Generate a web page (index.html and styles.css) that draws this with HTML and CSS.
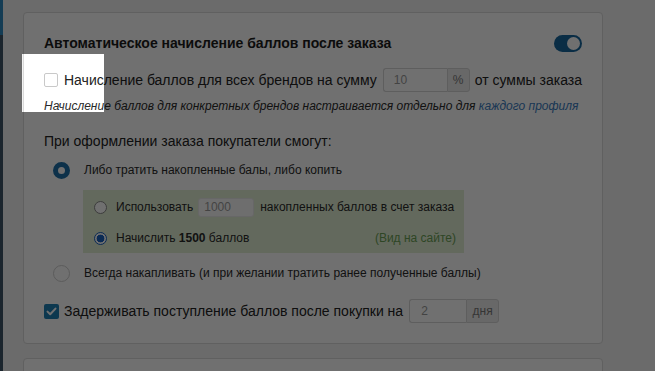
FILE: index.html
```html
<!DOCTYPE html>
<html lang="ru">
  <head>
    <meta charset="UTF-8" />
    <title>Бонусные баллы</title>
    <link rel="stylesheet" href="styles.css">
  </head>
  <body>
    <div class="layout">
      <aside class="sidebar"><div class="sidebar-top"></div></aside>
      <main class="content">
        <section class="card">
          <div class="card-head">
            <h3>Автоматическое начисление баллов после заказа</h3>
            <span class="toggle on"><span class="knob"></span></span>
          </div>

          <div class="check-row">
            <span class="checkbox"></span>
            <span>Начисление баллов для всех брендов на сумму</span>
            <span class="input-group pct">
              <input class="field" type="text" value="10" />
              <span class="addon">%</span>
            </span>
            <span>от суммы заказа</span>
          </div>
          <p class="hint">
            Начисление баллов для конкретных брендов настраивается отдельно для
            <a href="#">каждого профиля</a>
          </p>

          <p class="lead">При оформлении заказа покупатели смогут:</p>

          <div class="radio-row">
            <span class="radio big checked"></span>
            <span>Либо тратить накопленные балы, либо копить</span>
          </div>
          <div class="options">
            <div class="opt-row first">
              <span class="radio small"></span>
              <span>Использовать</span>
              <input class="field mini" type="text" value="1000" />
              <span>накопленных баллов в счет заказа</span>
            </div>
            <div class="opt-row second">
              <span class="radio small checked"></span>
              <span>Начислить <b>1500</b> баллов</span>
              <span class="preview">(Вид на сайте)</span>
            </div>
          </div>
          <div class="radio-row last">
            <span class="radio big"></span>
            <span>Всегда накапливать (и при желании тратить ранее полученные баллы)</span>
          </div>

          <div class="check-row delay">
            <span class="checkbox checked">
              <svg width="11" height="9" viewBox="0 0 11 9"><path d="M1.5 4.6 L4.2 7.2 L9.5 1.6" fill="none" stroke="#fff" stroke-width="2" stroke-linecap="round" stroke-linejoin="round"/></svg>
            </span>
            <span>Задерживать поступление баллов после покупки на</span>
            <span class="input-group days">
              <input class="field" type="text" value="2" />
              <span class="addon">дня</span>
            </span>
          </div>
        </section>
        <section class="card card-next"></section>
      </main>
    </div>
    <div class="tour-highlight"></div>
  </body>
</html>
```

FILE: styles.css
```css
html, body {
  margin: 0;
  height: 371px;
  overflow: hidden;
}
body {
  background: #f3f3f3;
  font-family: "Liberation Sans", Arial, sans-serif;
  color: #222;
}
.layout {
  display: flex;
  height: 371px;
  overflow: hidden;
}
.sidebar {
  width: 3px;
  background: #3e5566;
  flex-shrink: 0;
}
.sidebar-top {
  height: 35px;
  background: #2f8ac0;
}
.content {
  padding: 12px 0 0 20px;
}
.card {
  box-sizing: border-box;
  width: 580px;
  background: #fff;
  border: 1px solid #dadada;
  border-radius: 4px;
  padding: 20px;
  white-space: nowrap;
}
.card-next {
  margin-top: 14px;
  height: 60px;
}
.card-head {
  display: flex;
  align-items: center;
  justify-content: space-between;
  height: 20px;
}
.card-head h3 {
  margin: 0;
  font-size: 14px;
  line-height: 20px;
  font-weight: bold;
  color: #1d1d1d;
}
.toggle {
  position: relative;
  width: 28px;
  height: 17px;
  border-radius: 9px;
  background: #d0d0d0;
}
.toggle.on {
  background: #17679e;
}
.toggle .knob {
  position: absolute;
  top: 2px;
  right: 2px;
  width: 13px;
  height: 13px;
  border-radius: 50%;
  background: #fff;
}

.check-row {
  display: flex;
  align-items: center;
  height: 24px;
  margin-top: 15px;
  font-size: 14px;
  color: #222;
}
.checkbox {
  box-sizing: border-box;
  width: 14px;
  height: 14px;
  border: 1px solid #c9c9c9;
  border-radius: 2px;
  background: #fff;
  margin-right: 6px;
  flex-shrink: 0;
}
.checkbox.checked {
  width: 15px;
  height: 15px;
  margin-right: 5px;
  border: none;
  background: #1f7fb5;
  display: flex;
  align-items: center;
  justify-content: center;
}

.input-group {
  display: flex;
  height: 24px;
  margin: 0 5px 0 6px;
}
.input-group .field {
  box-sizing: border-box;
  height: 24px;
  border: 1px solid #d6d6d6;
  border-right: none;
  border-radius: 3px 0 0 3px;
  padding: 0 0 0 10px;
  font-family: inherit;
  font-size: 12px;
  color: #9a9a9a;
  background: #fff;
}
.input-group .addon {
  box-sizing: border-box;
  height: 24px;
  border: 1px solid #d6d6d6;
  border-radius: 0 3px 3px 0;
  background: #ececec;
  color: #7a7a7a;
  font-size: 12px;
  display: flex;
  align-items: center;
  justify-content: center;
}
.pct .field {
  width: 64px;
}
.pct .addon {
  width: 23px;
}
.days .field {
  width: 57px;
  padding-left: 11px;
}
.days .addon {
  width: 33px;
}

.hint {
  margin: 6px 0 0;
  font-size: 12px;
  line-height: 16px;
  font-style: italic;
  color: #2a2a2a;
}
.hint a {
  color: #3b7cc0;
  text-decoration: none;
}
.lead {
  margin: 17px 0 0;
  font-size: 14px;
  line-height: 20px;
  color: #222;
}

.radio-row {
  display: flex;
  align-items: center;
  height: 20px;
  margin: 9px 0 0 9px;
  font-size: 12px;
  color: #2a2a2a;
}
.radio-row.last {
  margin-top: 10px;
}
.radio {
  box-sizing: border-box;
  border-radius: 50%;
  background: #fff;
  flex-shrink: 0;
}
.radio.big {
  width: 17px;
  height: 17px;
  border: 1px solid #d0d0d0;
  margin-right: 14px;
}
.radio.big.checked {
  border: 5px solid #1f70a8;
}
.radio.small {
  width: 13px;
  height: 13px;
  border: 1px solid #8a8a8a;
  margin-right: 9px;
}
.radio.small.checked {
  border: 1px solid #1b62c0;
  background: radial-gradient(circle, #1b62c0 0 3.6px, #fff 4.2px);
}

.options {
  box-sizing: border-box;
  width: 381px;
  margin: 10px 0 0 39px;
  padding: 7px 8px 5px 11px;
  background: #e1efd3;
  font-size: 12px;
  color: #2a2a2a;
}
.opt-row {
  display: flex;
  align-items: center;
  height: 20px;
}
.opt-row.second {
  margin-top: 11px;
}
.field.mini {
  box-sizing: border-box;
  width: 56px;
  height: 19px;
  margin: 0 6px 0 5px;
  padding: 0 0 0 5px;
  border: 1px solid #eaeaea;
  border-radius: 3px;
  background: #fafafa;
  font-family: inherit;
  font-size: 12px;
  color: #9a9a9a;
}
.preview {
  margin-left: auto;
  color: #6a9f55;
}

.check-row.delay {
  margin-top: 16px;
}

.tour-highlight {
  position: absolute;
  left: 22px;
  top: 54px;
  width: 82px;
  height: 58px;
  box-shadow: 0 0 0 2000px rgba(0, 0, 0, 0.56);
}
```
